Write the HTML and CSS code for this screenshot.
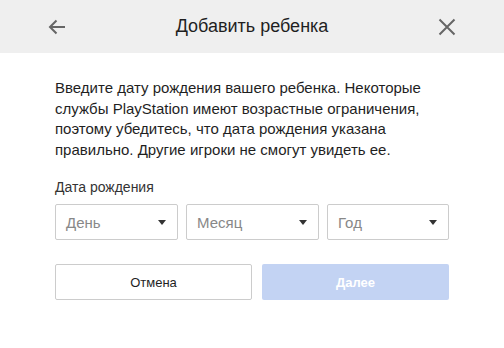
FILE: index.html
```html
<!DOCTYPE html>
<html lang="ru">
<head>
    <meta charset="UTF-8">
    <meta name="viewport" content="width=device-width, initial-scale=1.0">
    <link rel="stylesheet" href="styles.css">
    <title>Добавить ребенка</title>
</head>
<body>
    <div class="dialog">
        <div class="header">
            <button class="icon-btn" aria-label="Назад">
                <svg width="18" height="16" viewBox="0 0 18 16">
                    <path d="M17 8H2M8.5 1.5L2 8l6.5 6.5" fill="none" stroke="#666" stroke-width="2"/>
                </svg>
            </button>
            <h1>Добавить ребенка</h1>
            <button class="icon-btn" aria-label="Закрыть">
                <svg width="18" height="18" viewBox="0 0 18 18">
                    <path d="M1.5 1.5l15 15M16.5 1.5l-15 15" fill="none" stroke="#666" stroke-width="2"/>
                </svg>
            </button>
        </div>
        <div class="content">
            <p class="intro">Введите дату рождения вашего ребенка. Некоторые службы PlayStation имеют возрастные ограничения, поэтому убедитесь, что дата рождения указана правильно. Другие игроки не смогут увидеть ее.</p>
            <label class="field-label">Дата рождения</label>
            <div class="date-row">
                <div class="select day"><span>День</span><i class="caret"></i></div>
                <div class="select month"><span>Месяц</span><i class="caret"></i></div>
                <div class="select year"><span>Год</span><i class="caret"></i></div>
            </div>
            <div class="actions">
                <button class="btn cancel">Отмена</button>
                <button class="btn next" disabled>Далее</button>
            </div>
        </div>
    </div>
</body>
</html>
```

FILE: styles.css
```css
body {
    font-family: "Liberation Sans", Arial, sans-serif;
    background-color: #fff;
    color: #1f1f1f;
    margin: 0;
    padding: 0;
}

.header {
    height: 53px;
    background-color: #efefef;
    display: flex;
    align-items: center;
    justify-content: space-between;
    padding: 0 39px;
}

.header h1 {
    margin: 0;
    font-size: 18px;
    font-weight: normal;
    color: #1f1f1f;
}

.icon-btn {
    background: none;
    border: none;
    padding: 0;
    width: 36px;
    height: 36px;
    display: flex;
    align-items: center;
    justify-content: center;
    cursor: pointer;
}

.content {
    padding: 25px 55px 0;
}

.intro {
    margin: 0;
    font-size: 15px;
    line-height: 20.5px;
    color: #1f1f1f;
}

.field-label {
    display: block;
    margin-top: 19px;
    font-size: 14px;
    color: #333;
}

.date-row {
    display: grid;
    grid-template-columns: 123px 133px 122px;
    gap: 8px;
    margin-top: 9px;
}

.select {
    height: 36px;
    box-sizing: border-box;
    border: 1px solid #ccc;
    border-radius: 2px;
    display: flex;
    align-items: center;
    justify-content: space-between;
    padding: 0 11px 0 10px;
    font-size: 15px;
    color: #888;
}

.caret {
    width: 0;
    height: 0;
    border-left: 4px solid transparent;
    border-right: 4px solid transparent;
    border-top: 5px solid #333;
}

.actions {
    display: grid;
    grid-template-columns: 197px 187px;
    gap: 10px;
    margin-top: 24px;
}

.btn {
    height: 36px;
    border-radius: 2px;
    font-family: inherit;
    font-size: 13px;
    cursor: pointer;
}

.cancel {
    background-color: #fff;
    border: 1px solid #ccc;
    color: #1f1f1f;
}

.next {
    background-color: #c3d3f3;
    border: none;
    color: #fff;
    font-weight: bold;
    cursor: default;
}
```
